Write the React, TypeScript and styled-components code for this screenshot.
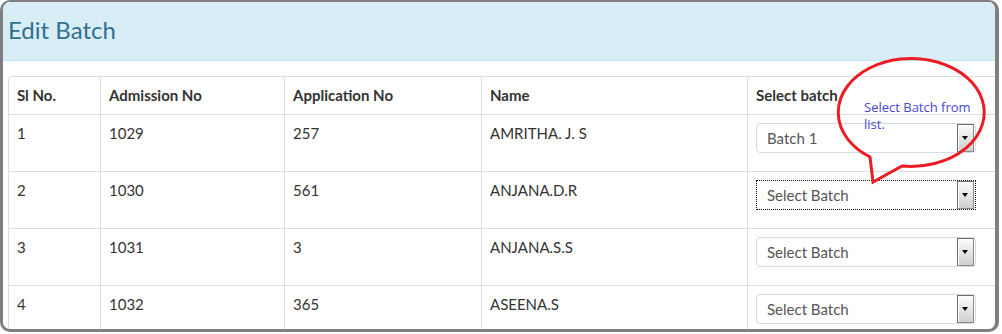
import React from 'react'
import styled, { createGlobalStyle } from 'styled-components'

const GlobalStyle = createGlobalStyle`
  html, body {
    margin: 0;
    padding: 0;
    background: #fff;
  }
  body {
    font-family: Lato, 'Open Sans', sans-serif;
    font-size: 15px;
    color: #333;
  }
`

interface Student {
  sl: number
  admission: string
  application: string
  name: string
  batch: string
  focused?: boolean
}

const students: Student[] = [
  { sl: 1, admission: '1029', application: '257', name: 'AMRITHA. J. S', batch: 'Batch 1' },
  { sl: 2, admission: '1030', application: '561', name: 'ANJANA.D.R', batch: 'Select Batch', focused: true },
  { sl: 3, admission: '1031', application: '3', name: 'ANJANA.S.S', batch: 'Select Batch' },
  { sl: 4, admission: '1032', application: '365', name: 'ASEENA.S', batch: 'Select Batch' },
]

const columns = [
  { label: 'Sl No.', width: 91 },
  { label: 'Admission No', width: 184 },
  { label: 'Application No', width: 197 },
  { label: 'Name', width: 266 },
  { label: 'Select batch', width: 262 },
]

const Panel = styled.div`
  position: relative;
  box-sizing: border-box;
  width: 999px;
  height: 332px;
  border-style: solid;
  border-color: #7f7f7f;
  border-width: 2px 4px 3px 3px;
  border-radius: 10px;
  overflow: hidden;
  background: #fff;
`

const Heading = styled.div`
  box-sizing: border-box;
  height: 59px;
  padding: 14px 5px 0;
  background: #d9edf7;
  border-bottom: 1px solid #bce8f1;
`

const Title = styled.h3`
  margin: 0;
  font-size: 24px;
  font-weight: 400;
  line-height: 1.2;
  color: #31708f;
`

const Body = styled.div`
  padding: 15px 0 0 5px;
`

const Table = styled.table`
  width: 1002px;
  table-layout: fixed;
  border-collapse: separate;
  border-spacing: 0;
  border: 1px solid #ddd;
  border-radius: 4px 0 0 0;
  font-size: 15px;
`

const Th = styled.th<{ $first?: boolean }>`
  box-sizing: border-box;
  padding: 8px 8px 9px;
  text-align: left;
  font-weight: 700;
  line-height: 20px;
  color: #333;
  border-left: ${p => (p.$first ? 'none' : '1px solid #ddd')};
`

const Td = styled.td<{ $first?: boolean }>`
  box-sizing: border-box;
  padding: 8px;
  vertical-align: top;
  line-height: 20px;
  color: #333;
  border-top: 1px solid #ddd;
  border-left: ${p => (p.$first ? 'none' : '1px solid #ddd')};
`

const Select = styled.div<{ $focused?: boolean }>`
  box-sizing: border-box;
  display: flex;
  align-items: stretch;
  width: 220px;
  height: 30px;
  margin: 0 0 10px;
  border: ${p => (p.$focused ? '1px dotted #111' : '1px solid #d3dbe3')};
  border-radius: ${p => (p.$focused ? '0' : '4px')};
  background: #fff;
`

const SelectText = styled.span`
  flex: 1;
  padding-left: 10px;
  font-size: 15px;
  line-height: 28px;
  color: #555;
`

const ArrowButton = styled.span`
  box-sizing: border-box;
  position: relative;
  width: 17px;
  margin: 0 1px 0 0;
  border: 1px solid #6d6d6d;
  border-right-color: #8a8a8a;
  border-bottom-color: #8a8a8a;
  background: linear-gradient(#fbfbfb, #e6e6e6 50%, #cfcfcf);
  box-shadow: inset 1px 1px 0 #fff;

  &::after {
    content: '';
    position: absolute;
    left: 4px;
    top: 11px;
    border-left: 3.5px solid transparent;
    border-right: 3.5px solid transparent;
    border-top: 4px solid #000;
  }
`

const CalloutShape = styled.svg`
  position: absolute;
  left: 832px;
  top: 53px;
  overflow: visible;
  pointer-events: none;
`

const CalloutText = styled.div`
  position: absolute;
  left: 861px;
  top: 97px;
  width: 114px;
  font-family: 'Open Sans', 'Liberation Sans', sans-serif;
  font-size: 13px;
  line-height: 17px;
  color: #4646d6;
`

export default function App() {
  return (
    <>
      <GlobalStyle />
      <Panel>
        <Heading>
          <Title>Edit Batch</Title>
        </Heading>
        <Body>
          <Table>
            <thead>
              <tr>
                {columns.map((c, i) => (
                  <Th key={c.label} $first={i === 0} style={{ width: c.width }}>
                    {c.label}
                  </Th>
                ))}
              </tr>
            </thead>
            <tbody>
              {students.map(s => (
                <tr key={s.sl}>
                  <Td $first>{s.sl}</Td>
                  <Td>{s.admission}</Td>
                  <Td>{s.application}</Td>
                  <Td>{s.name}</Td>
                  <Td>
                    <Select $focused={s.focused}>
                      <SelectText>{s.batch}</SelectText>
                      <ArrowButton />
                    </Select>
                  </Td>
                </tr>
              ))}
            </tbody>
          </Table>
        </Body>
        <CalloutShape width="160" height="135" viewBox="835 55 160 135">
          <path
            d="M 902 166 A 73 54 0 1 0 870 157 L 873 182 Z"
            fill="none"
            stroke="#ec1c24"
            strokeWidth="3"
            strokeLinejoin="miter"
          />
        </CalloutShape>
        <CalloutText>Select Batch from list.</CalloutText>
      </Panel>
    </>
  )
}
